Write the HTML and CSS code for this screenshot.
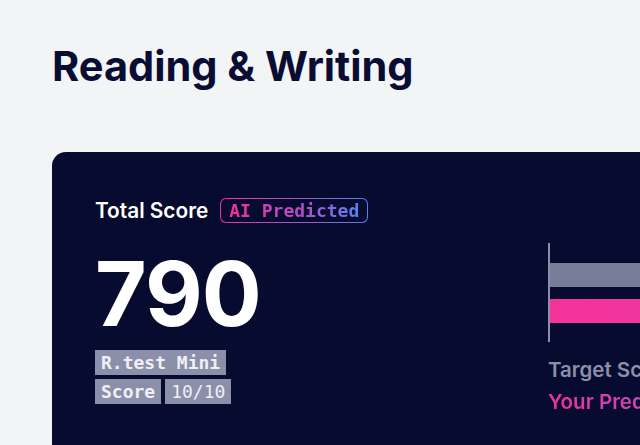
FILE: index.html
```html
<!DOCTYPE html>
<html lang="en">
<head>
<meta charset="utf-8">
<link rel="stylesheet" href="styles.css">
</head>
<body>
<main class="page">
  <h1 class="title">Reading &amp; Writing</h1>
  <section class="card">
    <div class="left">
      <div class="head">
        <span class="head-label">Total Score</span>
        <span class="badge"><span class="badge-text">AI Predicted</span></span>
      </div>
      <div class="score">790</div>
      <div class="tags">
        <div class="tag-row"><span class="tag strong">R.test Mini</span></div>
        <div class="tag-row"><span class="tag strong">Score</span><span class="tag">10/10</span></div>
      </div>
    </div>
    <div class="right">
      <div class="chart">
        <div class="bar bar-target"></div>
        <div class="bar bar-pred"></div>
      </div>
      <div class="legend">
        <div class="legend-target">Target Score</div>
        <div class="legend-pred">Your Predicted Score</div>
      </div>
    </div>
  </section>
</main>
</body>
</html>
```
FILE: styles.css
```css
html, body {
  margin: 0;
  padding: 0;
  background: #f3f4f6;
  overflow: hidden;
  width: 640px;
  height: 445px;
}
.page {
  padding: 40px 0 0 52px;
  font-family: Inter, "Noto Sans", sans-serif;
}
.title {
  margin: 0;
  font-size: 41.5px;
  line-height: 52px;
  font-weight: 700;
  color: #0a0d33;
  letter-spacing: 0;
}
.card {
  margin-top: 60px;
  width: 1000px;
  height: 400px;
  background: #080b30;
  border-radius: 14px;
  display: flex;
  box-sizing: border-box;
  padding: 44px 0 0 43px;
}
.left {
  width: 453px;
  flex: none;
}
.head {
  display: flex;
  align-items: center;
  gap: 12px;
  height: 28px;
}
.head-label {
  color: #ffffff;
  font-size: 20.8px;
  font-weight: 600;
}
.badge {
  display: inline-flex;
  align-items: center;
  height: 25px;
  box-sizing: border-box;
  padding: 0 8px;
  border: 1.5px solid transparent;
  border-radius: 6px;
  background:
    linear-gradient(#080b30, #080b30) padding-box,
    linear-gradient(90deg, #f0319a, #5b7cf0) border-box;
}
.badge-text {
  font-family: "DejaVu Sans Mono", monospace;
  font-weight: 700;
  font-size: 18px;
  background: linear-gradient(90deg, #f0319a, #b24fc4 55%, #5b80f0);
  -webkit-background-clip: text;
  background-clip: text;
  color: transparent;
}
.score {
  margin-top: 25px;
  color: #ffffff;
  font-size: 89px;
  font-weight: 700;
  line-height: 90px;
  letter-spacing: -1px;
}
.tags {
  margin-top: 11px;
  display: flex;
  flex-direction: column;
  gap: 4px;
}
.tag-row {
  display: flex;
  gap: 4px;
}
.tag {
  background: #8b8fa9;
  color: #eef0f5;
  font-family: "DejaVu Sans Mono", monospace;
  font-size: 18px;
  line-height: 25px;
  padding: 0 6px;
}
.tag.strong {
  font-weight: 700;
}
.right {
  padding-top: 47px;
  flex: 1;
}
.chart {
  border-left: 2px solid #8b8fa9;
  height: 99px;
  box-sizing: border-box;
  padding-top: 20px;
  display: flex;
  flex-direction: column;
  gap: 12px;
}
.bar {
  height: 24px;
}
.bar-target {
  width: 300px;
  background: #787c98;
}
.bar-pred {
  width: 280px;
  background: linear-gradient(90deg, #f5329a, #e63aa6);
}
.legend {
  margin-top: 12px;
  font-size: 20.5px;
  font-weight: 600;
  line-height: 32px;
}
.legend-target {
  color: #8b8fa9;
}
.legend-pred {
  background: linear-gradient(90deg, #f0319a 0, #c04ac2 120px, #5b80f0 260px);
  -webkit-background-clip: text;
  background-clip: text;
  color: transparent;
  display: inline-block;
}
```
